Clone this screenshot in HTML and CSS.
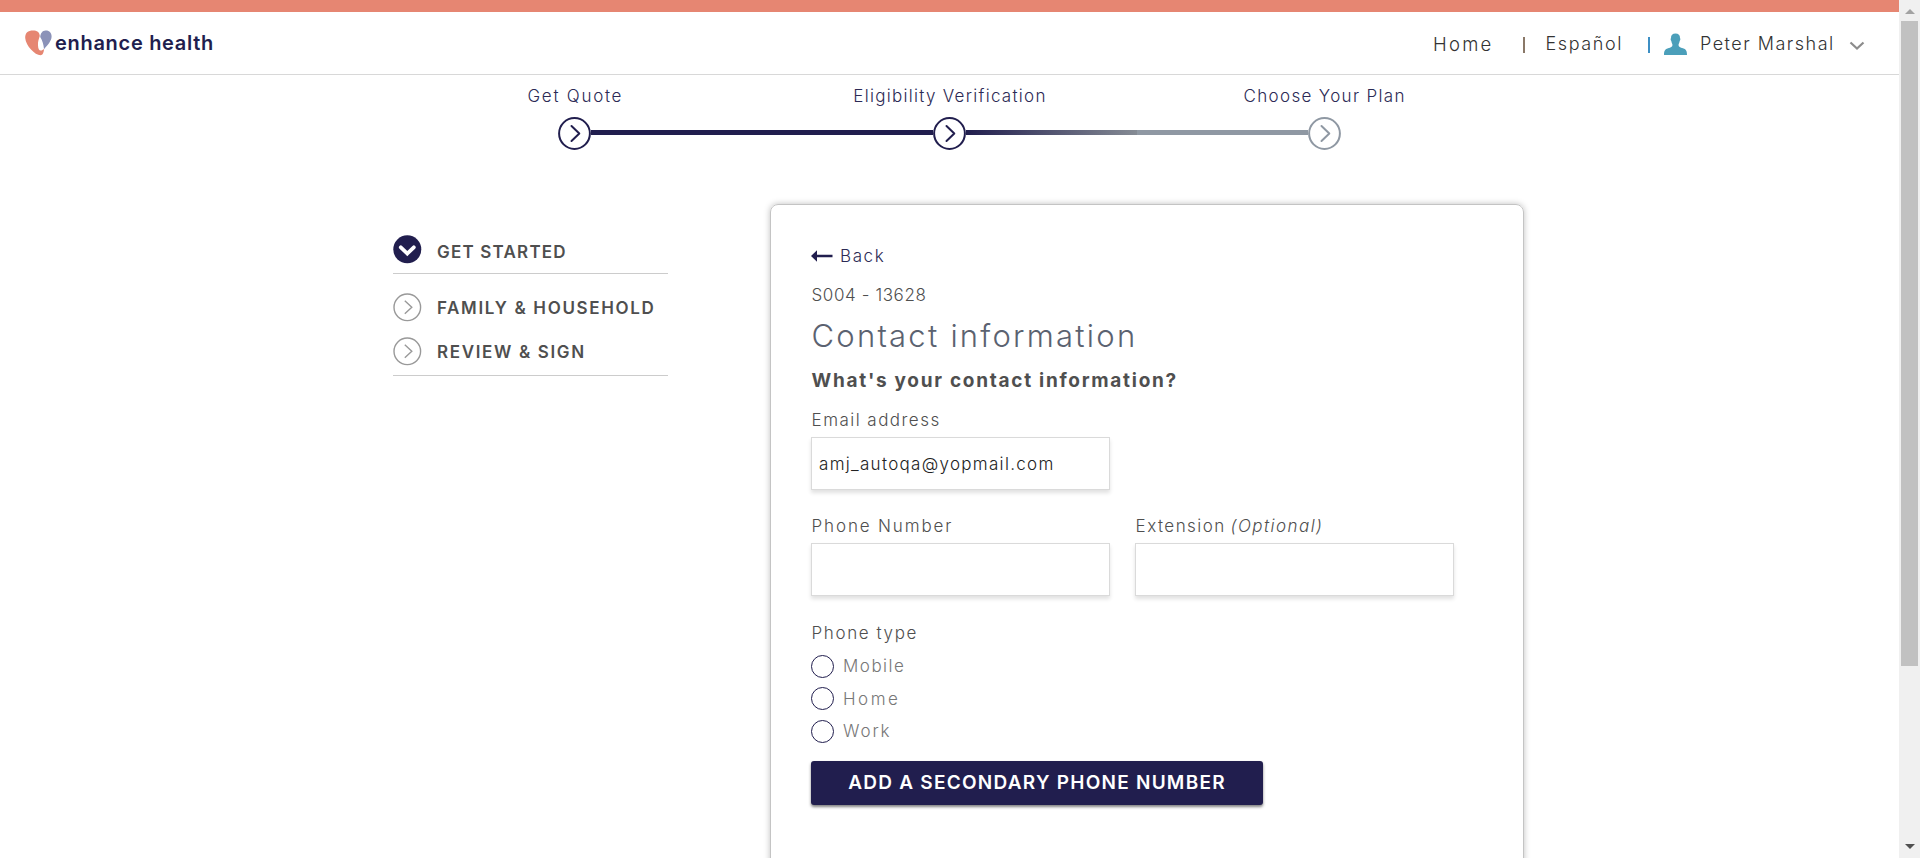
FILE: index.html
```html
<!DOCTYPE html>
<html lang="en">
<head>
<meta charset="utf-8">
<title>Contact information</title>
<link rel="stylesheet" href="styles.css">
</head>
<body>
<div class="page">
  <div class="topbar"></div>
  <header class="header">
    <a class="logo">
      <svg class="logo-mark" viewBox="0 0 27 26"><path fill="#e68672" d="M0.200 8C0 3 3 0.600 8 0.600c4 0 6.600 1.800 6.800 5.400C14 9 12.700 11 13 15.500c0.200 3.500 1 5 2.700 5 1.300 0 2.300-0.600 3.400-1.500C18.700 22.500 17.800 25.200 15.500 25.200 10 25.200 0.800 16 0.200 8z"/><path fill="#8b92b8" d="M20.500 0.400c3.900-0.200 6.200 2.400 6.100 6.200-0.100 4.400-3.800 8.600-7.600 12.600C18.600 14.500 17.500 10.500 15.200 7 15.500 3 17.500 0.600 20.500 0.400z"/></svg>
      <span class="brand">enhance health</span>
    </a>
    <nav class="nav">
      <span class="nav-home">Home</span>
      <i class="sep"></i>
      <span class="nav-lang">Español</span>
      <i class="sep sep-blue"></i>
      <svg class="avatar" viewBox="0 0 23 22"><path fill="#4b9fba" d="M11.500 0.500c3 0 4.600 1.500 4.500 4.500 0.600 1 0.400 2.200-0.300 3-0.300 1.800-1 2.700-1.200 4 0.200 2 1.500 2.500 4.500 3.300 3 0.900 4 2.700 4 6.700H0c0-4 1-5.800 4-6.700 3-0.800 4.300-1.300 4.500-3.300-0.200-1.300-0.900-2.200-1.200-4-0.700-0.800-0.900-2-0.300-3C6.900 2 8.500 0.500 11.500 0.500z"/></svg>
      <span class="nav-user">Peter Marshal</span>
      <svg class="caret" viewBox="0 0 16 10"><path d="M1.500 1.500 8 7.500 14.500 1.500" fill="none" stroke="#8c8c8c" stroke-width="2.200"/></svg>
    </nav>
  </header>

  <section class="stepper">
    <div class="step-labels">
      <span class="step-quote">Get Quote</span>
      <span class="step-verify">Eligibility Verification</span>
      <span class="step-plan">Choose Your Plan</span>
    </div>
    <div class="track">
      <svg class="dot" viewBox="0 0 33 33"><circle cx="16.500" cy="16.500" r="15.400"/><path d="M13.500 9 21.300 16.500 13.500 24"/></svg>
      <div class="line line-done"></div>
      <svg class="dot" viewBox="0 0 33 33"><circle cx="16.500" cy="16.500" r="15.400"/><path d="M13.500 9 21.300 16.500 13.500 24"/></svg>
      <div class="line line-fade"></div>
      <div class="line line-todo"></div>
      <svg class="dot dot-todo" viewBox="0 0 33 33"><circle cx="16.500" cy="16.500" r="15.400"/><path d="M13.500 9 21.300 16.500 13.500 24"/></svg>
    </div>
  </section>

  <main class="main">
    <aside class="side">
      <div class="side-item side-current">
        <svg class="side-icon" viewBox="0 0 28 28"><circle class="filled" cx="14.300" cy="14.300" r="14"/><path class="check" d="M7.800 12.300 14.300 18.500 20.800 12.300"/></svg>
        <span class="side-started">GET STARTED</span>
      </div>
      <div class="side-group">
        <div class="side-item">
          <svg class="side-icon" viewBox="0 0 28 28"><circle cx="14.300" cy="14.300" r="13.300"/><path d="M11.800 7.800 18.800 14.300 11.800 20.800"/></svg>
          <span class="side-family">FAMILY &amp; HOUSEHOLD</span>
        </div>
        <div class="side-item">
          <svg class="side-icon" viewBox="0 0 28 28"><circle cx="14.300" cy="14.300" r="13.300"/><path d="M11.800 7.800 18.800 14.300 11.800 20.800"/></svg>
          <span class="side-review">REVIEW &amp; SIGN</span>
        </div>
      </div>
    </aside>

    <section class="card">
      <a class="back">
        <svg class="back-arrow" viewBox="0 0 22 12"><path fill="#211e4e" d="M0 6 6 0.300V4.800H21.500V7.200H6V11.700z"/></svg>
        <span class="back-text">Back</span>
      </a>
      <div class="code">S004 - 13628</div>
      <h1 class="title">Contact information</h1>
      <h2 class="question">What's your contact information?</h2>
      <div class="field field-email">
        <label class="label">Email address</label>
        <div class="input">amj_autoqa@yopmail.com</div>
      </div>
      <div class="row">
        <div class="field field-phone">
          <label class="label label-phone">Phone Number</label>
          <div class="input"></div>
        </div>
        <div class="field field-ext">
          <label class="label">Extension <em>(Optional)</em></label>
          <div class="input"></div>
        </div>
      </div>
      <div class="label label-type">Phone type</div>
      <div class="radios">
        <label class="radio"><i></i><span class="radio-mobile">Mobile</span></label>
        <label class="radio"><i></i><span class="radio-home">Home</span></label>
        <label class="radio"><i></i><span class="radio-work">Work</span></label>
      </div>
      <button class="button">ADD A SECONDARY PHONE NUMBER</button>
    </section>
  </main>
</div>
<div class="scrollbar"><i class="up"></i><i class="thumb"></i><i class="down"></i></div>
</body>
</html>
```
FILE: styles.css
```css
* { box-sizing: border-box; }
html, body { margin: 0; height: 100%; overflow: hidden; }
body {
  display: flex;
  height: 858px;
  background: #fff;
  color: #4f4f4f;
  font: 300 17px/24px Inter, "Liberation Sans", sans-serif;
}
svg { display: block; flex: none; overflow: visible; }
span, em { white-space: nowrap; }
.page { flex: 1; height: 858px; overflow: hidden; }

.topbar { height: 12px; background: #e68672; }
.header {
  display: flex;
  justify-content: space-between;
  height: 63px;
  padding: 0 34px 0 25px;
  border-bottom: 1px solid #d8d8d8;
}
.logo { display: flex; padding-top: 18px; }
.logo-mark { width: 27px; height: 26px; }
.brand { margin-left: 3px; font-weight: 600; font-size: 20px; line-height: 26px; letter-spacing: .7px; color: #211e4e; }
.nav { display: flex; padding-top: 20px; font-size: 18px; color: #333; }
.sep { width: 2px; height: 16px; margin-top: 5px; background: #8a7868; }
.sep-blue { background: #3d8fc4; }
.nav-home { width: 90px; font-size: 18.500px; letter-spacing: 2.250px; }
.nav-lang { width: 102px; margin-left: 20.500px; letter-spacing: 1.600px; }
.avatar { width: 23px; height: 22px; margin: 1px 0 0 14.500px; }
.nav-user { width: 149px; margin-left: 13px; letter-spacing: 1.490px; }
.caret { width: 16px; height: 10px; margin-top: 9px; }

.stepper { width: 1125px; margin: 0 auto; padding-top: 9px; }
.step-labels { display: grid; grid-template-columns: repeat(3, 1fr); padding-left: 1px; text-align: center; color: #2c2a55; }
.step-quote { letter-spacing: 1.740px; }
.step-verify { letter-spacing: 1.280px; }
.step-plan { letter-spacing: 1.330px; }
.track { display: flex; align-items: center; height: 33px; margin-top: 9px; padding: 0 171px; }
.dot { width: 33px; height: 33px; fill: none; stroke: #211e4e; stroke-width: 2; stroke-linecap: round; stroke-linejoin: round; }
.dot-todo { stroke: #8f98a3; }
.line { height: 5px; margin-bottom: 3px; background: #211e4e; }
.line-done { flex: 2; }
.line-fade { flex: 1; background: linear-gradient(90deg, #211e4e, #858b94); }
.line-todo { flex: 1; background: #8f98a3; }

.main { display: flex; gap: 102px; padding: 54px 0 0 393px; }
.side { width: 275px; padding-top: 31px; font-weight: 600; }
.side-item { display: flex; gap: 16px; height: 28px; }
.side-item span { padding-top: 3px; }
.side-icon { width: 28px; height: 28px; fill: none; stroke: #999; stroke-width: 1.400; }
.side-icon .filled { fill: #211e4e; stroke: none; }
.side-icon .check { stroke: #fff; stroke-width: 3.800; stroke-linecap: round; }
.side-current { height: 39px; border-bottom: 1px solid #ccc; }
.side-item .side-started { padding-top: 5px; letter-spacing: 1.200px; }
.side-family { letter-spacing: 1.640px; }
.side-review { letter-spacing: 1.650px; }
.side-group { display: flex; flex-direction: column; gap: 16px; padding: 19px 0 10px; border-bottom: 1px solid #ccc; }

.card {
  width: 754px;
  height: 900px;
  padding: 39px 69px 0 40px;
  border: 1px solid #c4c4c4;
  border-radius: 8px;
  box-shadow: 0 0 6px rgba(0, 0, 0, .25);
}
.back { display: flex; align-items: center; color: #2c2a55; }
.back-arrow { width: 22px; height: 12px; }
.back-text { margin-left: 7px; letter-spacing: 1.600px; }
.code { margin-top: 15px; padding-left: .5px; letter-spacing: .6px; }
.title { margin: 9px 0 0; padding-left: .5px; font-weight: 300; font-size: 31px; line-height: 40px; letter-spacing: 2.240px; color: #5b6270; }
.question { margin: 13px 0 -1px; padding-left: .5px; font-weight: 700; font-size: 19px; line-height: 24px; letter-spacing: 1.720px; }
.field-email { width: 299px; margin-top: 16px; }
.row { display: flex; gap: 25px; margin-top: 24px; }
.field-phone { width: 299px; }
.field-ext { width: 319px; }
.label { display: block; padding-left: .6px; letter-spacing: 1.460px; }
.label em { margin-left: -1.500px; }
.label-phone { letter-spacing: 1.850px; }
.label-type { margin-top: 25px; letter-spacing: 1.600px; }
.input {
  height: 53px;
  margin-top: 5px;
  padding: 14px 7px;
  border: 1px solid #dadada;
  box-shadow: 0 3px 4px rgba(0, 0, 0, .12);
  letter-spacing: 1.300px;
  color: #222;
}
.radios { margin-top: 5px; }
.radio { display: flex; align-items: center; height: 32.500px; color: #777; }
.radio i { width: 23px; height: 23px; margin-right: 9px; border: 1px solid #211e4e; border-radius: 50%; }
.radio-mobile { letter-spacing: 1.500px; }
.radio-home { letter-spacing: 2.500px; }
.radio-work { letter-spacing: 1.900px; }
.button {
  display: block;
  width: 452px;
  height: 44px;
  margin-top: 13.500px;
  padding: 0;
  border: 0;
  border-radius: 3px;
  background: #211e4e;
  box-shadow: 0 2px 3px rgba(0, 0, 0, .5);
  color: #fff;
  font: 600 19px/44px Inter, "Liberation Sans", sans-serif;
  letter-spacing: 1.250px;
}

.scrollbar { display: flex; flex-direction: column; align-items: center; width: 21px; height: 858px; background: #f0f0f0; }
.up { margin-top: 9px; border: 5px solid transparent; border-top: 0; border-bottom-color: #a3a3a3; }
.thumb { width: 17px; height: 645px; margin-top: 7px; background: #c1c1c1; }
.down { margin-top: 178px; border: 5px solid transparent; border-bottom: 0; border-top-color: #505050; }
```
